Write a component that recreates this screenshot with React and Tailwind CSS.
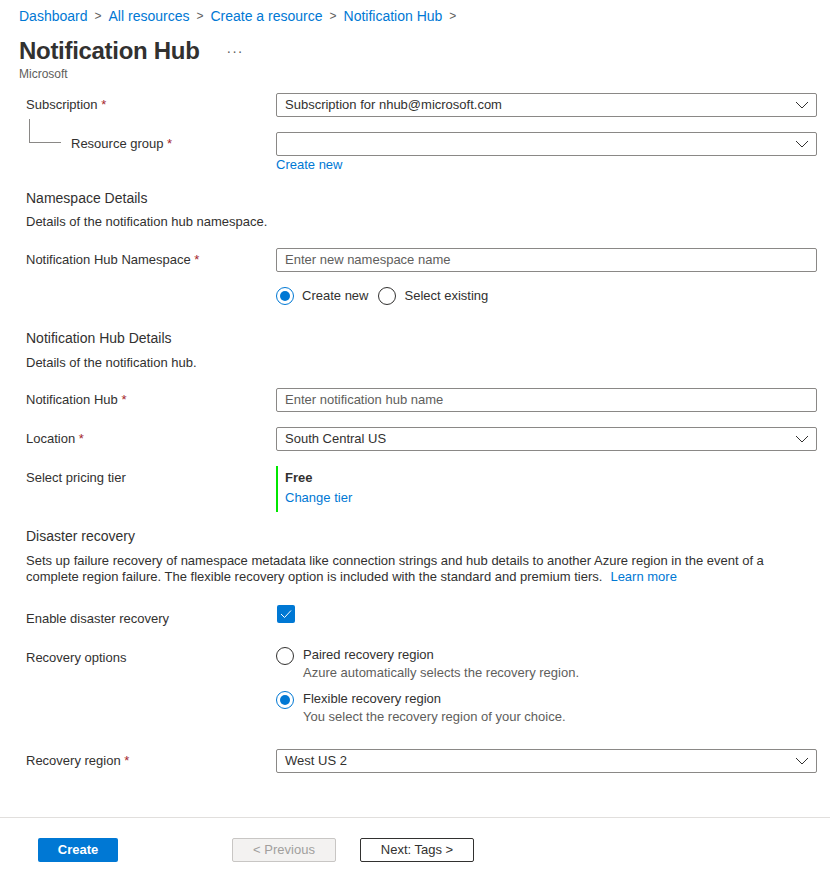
import React from 'react';

const FONT = { fontFamily: '"Liberation Sans", Arial, sans-serif' };

const Chevron = () => (
  <svg width="14" height="8" viewBox="0 0 14 8" fill="none" className="shrink-0">
    <path d="M1 1l6 6 6-6" stroke="#323130" strokeWidth="1" />
  </svg>
);

const Req = () => <span className="text-[#a4262c]">&nbsp;*</span>;

const Select = ({ value }) => (
  <div className="h-6 border border-[#8a8886] rounded-[2px] flex items-center justify-between pl-2 pr-[7px] text-[13px] text-[#323130]">
    <span>{value}</span>
    <Chevron />
  </div>
);

const Input = ({ placeholder }) => (
  <div className="h-6 border border-[#8a8886] rounded-[2px] flex items-center pl-2 text-[13px] text-[#605e5c]">
    {placeholder}
  </div>
);

const Radio = ({ checked }) => (
  <span
    className={`w-[18px] h-[18px] rounded-full border flex items-center justify-center shrink-0 ${
      checked ? 'border-[#0078d4]' : 'border-[#323130]'
    }`}
  >
    {checked && <span className="w-[10px] h-[10px] rounded-full bg-[#0078d4]" />}
  </span>
);

const Row = ({ label, children, className = '' }) => (
  <div className={`flex items-start ${className}`}>
    <div className="w-[250px] shrink-0 h-6 flex items-center text-[13px] text-[#323130]">{label}</div>
    <div className="flex-1">{children}</div>
  </div>
);

export default function App() {
  return (
    <div className="w-[830px] h-[882px] bg-white text-[#323130] overflow-hidden" style={FONT}>
      <div className="pl-[19px] pt-[6px]">
        <div className="flex items-center text-[14px] text-[#0078d4] h-5">
          {['Dashboard', 'All resources', 'Create a resource', 'Notification Hub'].map((b) => (
            <React.Fragment key={b}>
              <span>{b}</span>
              <span className="text-[#605e5c] mx-[7px] text-[12px]">&gt;</span>
            </React.Fragment>
          ))}
        </div>
        <div className="flex items-center mt-[10px] h-[30px]">
          <h1 className="text-[24px] font-semibold tracking-[-0.3px]">Notification Hub</h1>
          <span className="ml-[27px] text-[#605e5c] text-[14px] tracking-[1px]">···</span>
        </div>
        <div className="text-[12px] text-[#605e5c] leading-4">Microsoft</div>
      </div>

      <div className="pl-[26px] pr-[13px]">
        <Row label={<span>Subscription<Req /></span>} className="mt-[11px]">
          <Select value="Subscription for nhub@microsoft.com" />
        </Row>

        <div className="relative flex items-start mt-[15px]">
          <div className="absolute left-[3px] -top-[13px] w-[32px] h-[24px] border-l border-b border-[#8a8886]" />
          <div className="w-[250px] shrink-0 h-6 flex items-center pl-[45px] text-[13px]">
            <span>Resource group<Req /></span>
          </div>
          <div className="flex-1">
            <Select value="" />
            <div className="text-[13px] text-[#0078d4] h-[18px] leading-[18px] mt-0">Create new</div>
          </div>
        </div>

        <div className="mt-[14px] text-[14px] leading-5">Namespace Details</div>
        <div className="mt-[4px] text-[13px] leading-5">Details of the notification hub namespace.</div>

        <Row label={<span>Notification Hub Namespace<Req /></span>} className="mt-[16px]">
          <Input placeholder="Enter new namespace name" />
          <div className="flex items-center mt-[15px] text-[13px] h-[18px]">
            <Radio checked />
            <span className="ml-2">Create new</span>
            <span className="ml-[10px]"><Radio /></span>
            <span className="ml-2">Select existing</span>
          </div>
        </Row>

        <div className="mt-[23px] text-[14px] leading-5">Notification Hub Details</div>
        <div className="mt-[5px] text-[13px] leading-5">Details of the notification hub.</div>

        <Row label={<span>Notification Hub<Req /></span>} className="mt-[15px]">
          <Input placeholder="Enter notification hub name" />
        </Row>

        <Row label={<span>Location<Req /></span>} className="mt-[15px]">
          <Select value="South Central US" />
        </Row>

        <Row label="Select pricing tier" className="mt-[15px]">
          <div className="border-l-2 border-[#00e600] pl-[7px] pt-[2px] pb-[4px]">
            <div className="text-[13px] font-bold leading-5">Free</div>
            <div className="text-[13px] text-[#0078d4] leading-5">Change tier</div>
          </div>
        </Row>

        <div className="mt-[14px] text-[14px] leading-5">Disaster recovery</div>
        <div className="mt-[7px] text-[13px] leading-[16px]">
          <div>
            Sets up failure recovery of namespace metadata like connection strings and hub details to another Azure region in the event of a
          </div>
          <div className="flex">
            <span>complete region failure. The flexible recovery option is included with the standard and premium tiers.</span>
            <span className="text-[#0078d4] ml-[8px]">Learn more</span>
          </div>
        </div>

        <div className="flex items-start mt-[20px]">
          <div className="w-[250px] shrink-0 text-[13px] pt-[4px]">Enable disaster recovery</div>
          <div className="w-[18px] h-[18px] rounded-[2px] bg-[#0078d4] flex items-center justify-center ml-[1px]">
            <svg width="12" height="10" viewBox="0 0 12 10" fill="none">
              <path d="M1 5l3.5 3.5L11 1.5" stroke="white" strokeWidth="1" />
            </svg>
          </div>
        </div>

        <div className="flex items-start mt-[17px]">
          <div className="w-[250px] shrink-0 text-[13px] leading-5 pt-[2px]">Recovery options</div>
          <div className="flex-1">
            <div className="flex items-start">
              <span className="mt-[1px]"><Radio /></span>
              <div className="ml-[9px] text-[13px] leading-[18px]">
                <div>Paired recovery region</div>
                <div className="text-[#605e5c]">Azure automatically selects the recovery region.</div>
              </div>
            </div>
            <div className="flex items-start mt-2">
              <span className="mt-[1px]"><Radio checked /></span>
              <div className="ml-[9px] text-[13px] leading-[18px]">
                <div>Flexible recovery region</div>
                <div className="text-[#605e5c]">You select the recovery region of your choice.</div>
              </div>
            </div>
          </div>
        </div>

        <Row label={<span>Recovery region<Req /></span>} className="mt-[23px]">
          <Select value="West US 2" />
        </Row>
      </div>

      <div className="mt-[44px] border-t border-[#e1dfdd]" />

      <div className="flex items-center pl-[38px] mt-[20px]">
        <div className="w-[80px] h-6 bg-[#0078d4] text-white text-[13px] font-semibold flex items-center justify-center rounded-[2px]">
          Create
        </div>
        <div className="ml-[114px] w-[104px] h-6 bg-[#f3f2f1] border border-[#c8c6c4] text-[#a19f9d] text-[13px] flex items-center justify-center rounded-[2px]">
          &lt; Previous
        </div>
        <div className="ml-[24px] w-[114px] h-6 bg-white border border-[#323130] text-[#323130] text-[13px] flex items-center justify-center rounded-[2px]">
          Next: Tags &gt;
        </div>
      </div>
    </div>
  );
}
